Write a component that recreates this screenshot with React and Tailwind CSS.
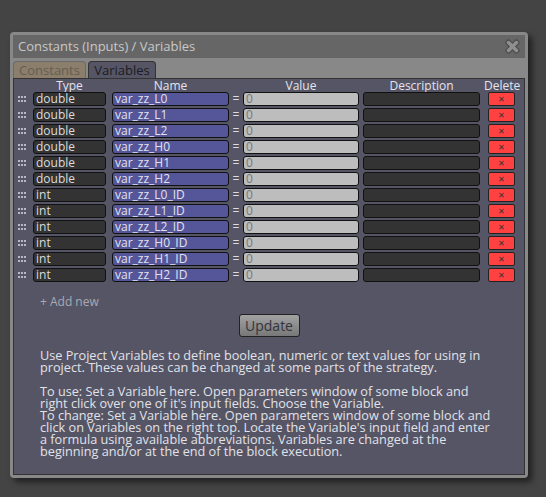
import React from "react";

const rows = [
  ["double", "var_zz_L0"],
  ["double", "var_zz_L1"],
  ["double", "var_zz_L2"],
  ["double", "var_zz_H0"],
  ["double", "var_zz_H1"],
  ["double", "var_zz_H2"],
  ["int", "var_zz_L0_ID"],
  ["int", "var_zz_L1_ID"],
  ["int", "var_zz_L2_ID"],
  ["int", "var_zz_H0_ID"],
  ["int", "var_zz_H1_ID"],
  ["int", "var_zz_H2_ID"],
];

function CloseIcon() {
  return (
    <svg width="15" height="15" viewBox="0 0 15 15">
      <path d="M3.5 3.5 L11.5 11.5 M11.5 3.5 L3.5 11.5" stroke="#4c4c4c" strokeWidth="6" strokeLinecap="round" />
      <path d="M3.5 3.5 L11.5 11.5 M11.5 3.5 L3.5 11.5" stroke="#8f8f8f" strokeWidth="3.5" strokeLinecap="round" />
    </svg>
  );
}

// drag handle: 3 columns x 2 rows of dots
function Handle() {
  return (
    <svg width="9" height="6" viewBox="0 0 9 6" className="ml-[4px] mr-[6px]">
      {[0, 3, 6].map((x) =>
        [0, 4].map((y) => <rect key={`${x}-${y}`} x={x} y={y} width="2" height="2" fill="#b8b8c8" />)
      )}
    </svg>
  );
}

function VarRow({ type, name }) {
  return (
    <div className="flex items-center h-[14px]">
      <Handle />
      <div className="w-[73px] h-[14px] bg-[#333333] border border-[#111] rounded-[3px] pl-[2px] text-[12px] leading-[12px] text-[#dcdcdc]">
        {type}
      </div>
      <div className="ml-[6px] w-[117px] h-[14px] bg-[#55559a] border border-[#111] rounded-[3px] pl-[2px] text-[12px] leading-[12px] text-[#e2e2ec]">
        {name}
      </div>
      <span className="w-[14px] text-center text-[12px] leading-[14px] text-[#dddddd]">=</span>
      <div className="w-[116px] h-[14px] bg-[#bdbdbd] border border-[#111] rounded-[3px] pl-[2px] text-[12px] leading-[12px] text-[#777]">
        0
      </div>
      <div className="ml-[4px] w-[117px] h-[14px] bg-[#333333] border border-[#111] rounded-[3px]" />
      <button className="ml-[8px] w-[27px] h-[14px] bg-[#ff4141] border border-[#222] rounded-[2px] text-[11px] leading-[12px] text-[#333] text-center">
        ×
      </button>
    </div>
  );
}

export default function App() {
  return (
    <div className="w-[546px] h-[497px] bg-[#444444] pt-[32px] pl-[10px]" style={{ fontFamily: '"Open Sans", "Noto Sans", sans-serif' }}>
      {/* window */}
      <div className="w-[518px] h-[446px] bg-[#888888] rounded-[4px] p-[3px] flex flex-col shadow-[4px_4px_6px_rgba(0,0,0,0.55)]">
        {/* title bar */}
        <div className="h-[23px] bg-[#666666] flex items-center justify-between pl-[5px] pr-[5px]">
          <span className="text-[13px] text-[#c8c8c8]">Constants (Inputs) / Variables</span>
          <CloseIcon />
        </div>

        {/* tabs */}
        <div className="mt-[3px] h-[17px] flex items-end gap-[2px]">
          <div className="w-[73px] h-[17px] bg-[#8b7e6b] rounded-t-[4px] border border-b-0 border-[#6a6a6a] text-center text-[13px] leading-[16px] text-[#655d52]">
            Constants
          </div>
          <div className="w-[68px] h-[17px] bg-[#555566] rounded-t-[4px] border border-b-0 border-[#333] text-center text-[13px] leading-[16px] text-[#1c1c22]">
            Variables
          </div>
        </div>

        {/* content panel */}
        <div className="flex-1 bg-[#555566] border border-[#333] flex flex-col">
          {/* header */}
          <div className="flex h-[13px] text-[12px] leading-[13px] text-[#e4e4ee]">
            <span className="ml-[19px] w-[73px] text-center">Type</span>
            <span className="ml-[6px] w-[117px] text-center">Name</span>
            <span className="ml-[14px] w-[116px] text-center">Value</span>
            <span className="ml-[4px] w-[117px] text-center">Description</span>
            <span className="ml-[4px] w-[36px] text-center">Delete</span>
          </div>

          <div className="flex flex-col gap-[2px]">
            {rows.map(([type, name]) => (
              <VarRow key={name} type={type} name={name} />
            ))}
          </div>

          <div className="mt-[12px] ml-[26px] text-[12px] leading-[16px] text-[#a9a9b4]">+ Add new</div>

          <div className="mt-[4px] flex justify-center">
            <button className="w-[61px] h-[23px] rounded-[3px] border border-[#222] bg-gradient-to-b from-[#a2a2a2] to-[#787878] text-[14px] leading-[20px] text-[#34343c]">
              Update
            </button>
          </div>

          <div className="mt-[12px] ml-[26px] w-[455px] text-[12.7px] leading-[12px] text-[#e2e2e8]">
            <p>
              Use Project Variables to define boolean, numeric or text values for using in project. These
              values can be changed at some parts of the strategy.
            </p>
            <p className="mt-[12px]">
              To use: Set a Variable here. Open parameters window of some block and right click over one of
              it's input fields. Choose the Variable.
            </p>
            <p>
              To change: Set a Variable here. Open parameters window of some block and click on Variables on
              the right top. Locate the Variable's input field and enter a formula using available
              abbreviations. Variables are changed at the beginning and/or at the end of the block execution.
            </p>
          </div>
        </div>
      </div>
    </div>
  );
}
